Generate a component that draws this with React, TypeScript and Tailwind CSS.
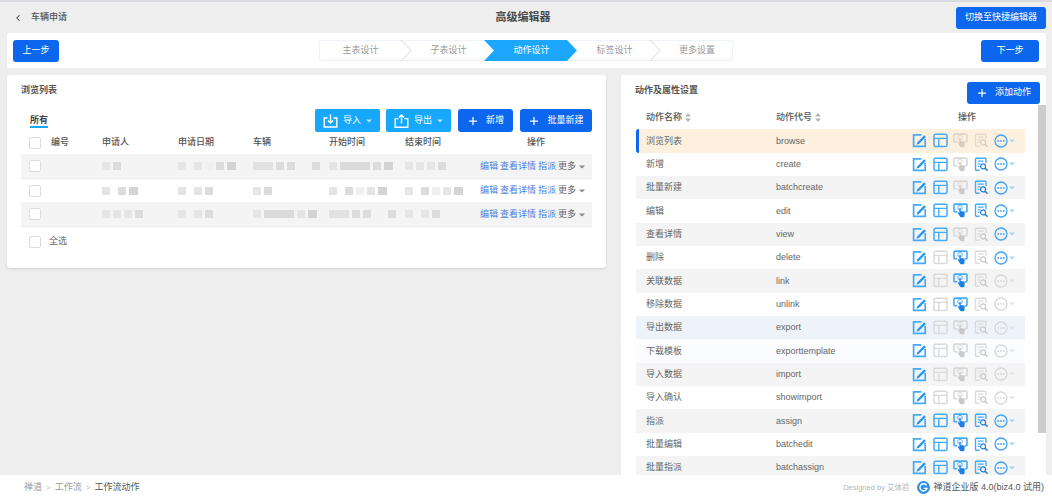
import React from "react";
import { ChevronLeft, Plus } from "lucide-react";

const font = "font-['Liberation_Sans','Noto_Sans_CJK_SC',sans-serif]";

const tokens: Record<string, string> = {
  a: "w-2 bg-[#f0f0f0]",
  b: "w-2 bg-[#e5e5e5]",
  c: "w-2 bg-[#dcdcdc]",
  d: "w-[9px] bg-[#d3d3d3]",
  W: "w-5 bg-[#e2e2e2]",
  X: "w-[30px] bg-[#dadada]",
  ".": "w-[2px]",
  "-": "w-[11px]",
};

const listRows = [
  { a: "bc", d: "b.bacd", car: "Wcc-c", s: "bXcd", e: "bbbc" },
  { a: "b.cd", d: "b.bc", car: "bc", s: "b.cabd", e: "b.cabd" },
  { a: "bbbc", d: "b.bc", car: "bXbd", s: "Wcc-c", e: "b.bc" },
];

const columns = [
  { label: "浏览列表", code: "browse", on: "11001", bg: "bg-[#fdf0de]" },
  { label: "新增", code: "create", on: "11011", bg: "bg-white" },
  { label: "批量新建", code: "batchcreate", on: "11011", bg: "bg-[#f4f4f4]" },
  { label: "编辑", code: "edit", on: "11111", bg: "bg-white" },
  { label: "查看详情", code: "view", on: "11001", bg: "bg-[#f4f4f4]" },
  { label: "删除", code: "delete", on: "10101", bg: "bg-white" },
  { label: "关联数据", code: "link", on: "10100", bg: "bg-[#f4f4f4]" },
  { label: "移除数据", code: "unlink", on: "10100", bg: "bg-white" },
  { label: "导出数据", code: "export", on: "10000", bg: "bg-[#eef3fa]" },
  { label: "下载模板", code: "exporttemplate", on: "10000", bg: "bg-[#fafcff]" },
  { label: "导入数据", code: "import", on: "10000", bg: "bg-[#f4f4f4]" },
  { label: "导入确认", code: "showimport", on: "10000", bg: "bg-white" },
  { label: "指派", code: "assign", on: "11111", bg: "bg-[#f4f4f4]" },
  { label: "批量编辑", code: "batchedit", on: "11111", bg: "bg-white" },
  { label: "批量指派", code: "batchassign", on: "11111", bg: "bg-[#f4f4f4]" },
];

const Blocks = ({ spec }: { spec: string }) => (
  <div className="flex items-center">
    {spec.split("").map((t, i) => (
      <span key={i} className={`h-2 mr-[3px] ${tokens[t]}`} />
    ))}
  </div>
);

const Checkbox = () => (
  <span className="block w-3 h-3 bg-white border-[1.5px] border-[#dcdcdc] rounded-[2px]" />
);

const Caret = ({ className }: { className: string }) => (
  <svg width="6" height="4" viewBox="0 0 6 4" className={className}>
    <path d="M0 .5h6L3 3.5z" fill="currentColor" />
  </svg>
);

const Sort = () => (
  <svg width="6" height="9" viewBox="0 0 6 9" className="text-[#b5b5b5]">
    <path d="M3 0l3 3.6H0zM3 9L0 5.4h6z" fill="currentColor" />
  </svg>
);

const EditIcon = ({ on }: { on: boolean }) => (
  <svg width="15" height="15" viewBox="0 0 15 15" fill="none" className={on ? "text-[#45aafa]" : "text-[#d6d6d6]"}>
    <path d="M9.4 1.9H1.6v11.5h11.6V6" stroke="currentColor" strokeWidth="1.7" />
    <path d="M5.2 9.4l7-7.2 1.7 1.7-7 7.2-2.4.7z" fill="#2a96f3" />
  </svg>
);

const LayoutIcon = ({ on, tint }: { on: boolean; tint: boolean }) => (
  <svg width="15" height="15" viewBox="0 0 15 15" fill="none" className={on ? "text-[#45aafa]" : tint ? "text-[#e2dacd]" : "text-[#dadada]"}>
    <rect x="1" y="1.2" width="13" height="12.4" rx="1.5" stroke="currentColor" strokeWidth="1.5" />
    <path d="M1 5.4h13M5.8 5.4v8" stroke="currentColor" strokeWidth="1.4" />
  </svg>
);

const TouchIcon = ({ on, tint }: { on: boolean; tint: boolean }) => {
  const color = on ? "text-[#45aafa]" : tint ? "text-[#dfd6c9]" : "text-[#d8d8d8]";
  const hand = on ? "#1a80e6" : tint ? "#d5ccbf" : "#c9c9c9";
  return (
    <svg width="15" height="15" viewBox="0 0 15 15" fill="none" className={color}>
      <path d="M4.4 8.8H1.8c-.5 0-.8-.3-.8-.8V1.9c0-.5.3-.8.8-.8h11.4c.5 0 .8.3.8.8V8c0 .5-.3.8-.8.8h-1.4" stroke="currentColor" strokeWidth="1.6" />
      <circle cx="7" cy="4.6" r="2.3" stroke="currentColor" strokeWidth=".9" />
      <path d="M6.4 5c0-.8 1.2-.8 1.2 0v3l3.2.6c.6.1 1 .6.9 1.2l-.3 3.6c0 .5-.4.8-.9.8H8c-.4 0-.7-.2-.9-.5L5 10.2c-.4-.6.3-1.2.8-.8l.6.5z" fill={hand} />
    </svg>
  );
};

const DocIcon = ({ on, tint }: { on: boolean; tint: boolean }) => {
  const color = on ? "text-[#45aafa]" : tint ? "text-[#e2dacd]" : "text-[#dadada]";
  const glass = on ? "#1f7fdc" : tint ? "#d5ccbf" : "#c8c8c8";
  return (
    <svg width="15" height="15" viewBox="0 0 15 15" fill="none" className={color}>
      <path d="M5.6 13.3H2.2c-.4 0-.7-.3-.7-.7V1.9c0-.4.3-.7.7-.7h9.1c.4 0 .7.3.7.7v4" stroke="currentColor" strokeWidth="1.4" />
      <path d="M3.8 4.2h5.8M3.8 6.8h2.6M3.8 9.4h1.8" stroke="currentColor" strokeWidth="1.2" />
      <circle cx="9.1" cy="9.4" r="2.5" stroke={glass} strokeWidth="1.2" />
      <path d="M11 11.3l2.6 2.5" stroke={glass} strokeWidth="1.5" />
    </svg>
  );
};

const MoreIcon = ({ on, tint }: { on: boolean; tint: boolean }) => (
  <span className={`flex items-center gap-[1px] -ml-px ${on ? "text-[#3fa2f6]" : "text-[#d8d8d8]"}`}>
    <svg width="14" height="14" viewBox="0 0 14 14" fill="none">
      <circle cx="7" cy="7" r="6" stroke="currentColor" strokeWidth="1.3" />
      <circle cx="4.2" cy="7" r=".9" fill="currentColor" />
      <circle cx="7" cy="7" r=".9" fill="currentColor" />
      <circle cx="9.8" cy="7" r=".9" fill="currentColor" />
    </svg>
    <Caret className={on || tint ? "text-[#a9d4f7]" : "text-[#e2e2e2]"} />
  </span>
);

const ImportIcon = () => (
  <svg width="15" height="14" viewBox="0 0 15 14" fill="none" stroke="white" strokeWidth="1.4">
    <path d="M4.5 4H1.2v9h12.6V4h-3.3" />
    <path d="M7.5 .5v8.2M5 6.4l2.5 2.6L10 6.4" />
  </svg>
);

const ExportIcon = () => (
  <svg width="15" height="14" viewBox="0 0 15 14" fill="none" stroke="white" strokeWidth="1.4">
    <path d="M4.5 4.6H1.2v8.6h12.6V4.6h-3.3" />
    <path d="M7.5 9.5V1.2M5 3.5l2.5-2.6L10 3.5" />
  </svg>
);

const Chevron = () => (
  <svg width="11" height="21" viewBox="0 0 11 21" fill="none" className="absolute right-[-11px] -top-px text-[#c8ccd2]">
    <path d="M0 0l10 10.5L0 21" stroke="currentColor" strokeWidth=".8" />
  </svg>
);

const Step = ({ label, width, first, chevron, active }: { label: string; width: string; first?: boolean; chevron?: boolean; active?: boolean }) => (
  <div className={`relative h-full flex items-center justify-center ${width} ${first ? "" : "pl-3"} ${active ? "text-white" : "text-[#9a9a9a]"}`}>
    {active && (
      <svg width="93" height="21" viewBox="0 0 93 21" className="absolute left-0 -top-px text-[#1ca7fd]">
        <path d="M0 0h83l10 10.5L83 21H0l10-10.5z" fill="currentColor" />
      </svg>
    )}
    <span className="relative">{label}</span>
    {chevron && <Chevron />}
  </div>
);

const PrimaryButton = ({ children, className }: { children: React.ReactNode; className: string }) => (
  <button className={`h-[22px] flex items-center justify-center rounded-[3px] bg-[#0c67ee] text-white text-[9px] ${className}`}>
    {children}
  </button>
);

export default function App() {
  return (
    <div className={`w-[1052px] h-[500px] flex flex-col overflow-hidden bg-[#eeeeee] border-t-2 border-[#d9d9e0] text-[9px] text-[#666] ${font}`}>
      {/* Header */}
      <div className="h-[31px] shrink-0 flex items-center pl-[13px] pr-[6px]">
        <div className="w-[450px] flex items-center text-[#555] font-medium">
          <ChevronLeft size={10} strokeWidth={2.5} className="text-[#444]" />
          <span className="ml-2">车辆申请</span>
        </div>
        <div className="w-[112px] ml-[4px] text-center text-[11px] font-semibold text-[#4a4a4a]">高级编辑器</div>
        <PrimaryButton className="w-[90px] ml-auto">切换至快捷编辑器</PrimaryButton>
      </div>

      {/* Toolbar */}
      <div className="h-[35px] shrink-0 ml-[7px] mr-[6px] bg-white rounded-[2px] flex items-center pl-[6px] pr-[7px]">
        <PrimaryButton className="w-[46px]">上一步</PrimaryButton>
        <div className="h-[21px] w-[414px] ml-[260px] border border-[#eef3f9] rounded-[2px] flex items-center">
          <Step label="主表设计" width="w-[81px]" first chevron />
          <Step label="子表设计" width="w-[83px]" />
          <Step label="动作设计" width="w-[83px]" active />
          <Step label="标签设计" width="w-[83px]" chevron />
          <Step label="更多设置" width="w-[82px]" />
        </div>
        <PrimaryButton className="w-[58px] ml-auto">下一步</PrimaryButton>
      </div>

      {/* Main */}
      <div className="flex-1 min-h-0 flex items-start gap-[15px] mt-[7px] pl-[7px] pr-[6px]">
        {/* Left panel */}
        <div className="w-[599px] h-[193px] bg-white rounded-[3px] shadow-sm px-[14px]">
          <div className="h-[30px] pt-[2px] flex items-center font-semibold text-[#555]">浏览列表</div>
          <div className="h-[26px] flex items-start pt-[4px]">
            <div className="ml-[9px] mt-[4px] h-[15px] border-b-2 border-[#17a8fb] text-[#444] font-semibold leading-[14px]">所有</div>
            <div className="ml-auto flex items-center">
              <button className="w-[65px] h-[23px] rounded-[2px] bg-[#17a8fb] text-white flex items-center justify-center gap-[5px]">
                <ImportIcon />
                <span>导入</span>
                <Caret className="text-white/70" />
              </button>
              <button className="w-[65px] h-[23px] ml-[6px] rounded-[2px] bg-[#17a8fb] text-white flex items-center justify-center gap-[5px]">
                <ExportIcon />
                <span>导出</span>
                <Caret className="text-white/70" />
              </button>
              <button className="w-[55px] h-[23px] ml-[7px] rounded-[3px] bg-[#0c67ee] text-white flex items-center justify-center gap-[7px]">
                <Plus size={12} strokeWidth={2.5} />
                <span>新增</span>
              </button>
              <button className="w-[72px] h-[23px] ml-[7px] rounded-[3px] bg-[#0c67ee] text-white flex items-center justify-center gap-[7px]">
                <Plus size={12} strokeWidth={2.5} />
                <span>批量新建</span>
              </button>
            </div>
          </div>

          {/* Table */}
          <div className="w-[571px]">
            <div className="h-[23px] grid grid-cols-[22px_51px_76px_75px_76px_76px_1fr] items-center pl-2 text-[#555] font-medium">
              <Checkbox />
              <span>编号</span>
              <span>申请人</span>
              <span>申请日期</span>
              <span>车辆</span>
              <span>开始时间</span>
              <span className="flex justify-between pr-[47px]">
                <span>结束时间</span>
                <span>操作</span>
              </span>
            </div>
            {listRows.map((row, i) => (
              <div
                key={i}
                className={`grid grid-cols-[22px_51px_76px_75px_76px_76px_1fr] items-center pl-2 ${i === 1 ? "h-[23px] bg-white" : "h-[25px] bg-[#f4f4f4] border-b border-[#ebebeb]"}`}
              >
                <Checkbox />
                <span />
                <Blocks spec={row.a} />
                <Blocks spec={row.d} />
                <Blocks spec={row.car} />
                <Blocks spec={row.s} />
                <div className="flex items-center">
                  <div className="w-[75px]">
                    <Blocks spec={row.e} />
                  </div>
                  <div className="flex items-center gap-[2px] pt-px whitespace-nowrap text-[#4b82e2]">
                    <span>编辑</span>
                    <span>查看详情</span>
                    <span>指派</span>
                    <span className="text-[#666]">更多</span>
                    <Caret className="text-[#888] ml-[1px]" />
                  </div>
                </div>
              </div>
            ))}
            <div className="h-[28px] pt-px flex items-center pl-2 gap-[8px]">
              <Checkbox />
              <span>全选</span>
            </div>
          </div>
        </div>

        {/* Right panel */}
        <div className="flex-1 self-stretch min-h-0 overflow-hidden bg-white rounded-t-[3px] pl-[15px]">
          <div className="h-[30px] flex items-center pr-[6px]">
            <span className="-ml-px pt-[2px] font-semibold text-[#555]">动作及属性设置</span>
            <button className="w-[73px] h-[22px] mt-[5px] ml-auto rounded-[3px] bg-[#0c67ee] text-white flex items-center justify-center gap-[7px]">
              <Plus size={12} strokeWidth={2.5} />
              <span>添加动作</span>
            </button>
          </div>
          <div className="flex">
            <div className="w-[389px]">
              <div className="h-[24.3px] pt-px flex items-center pl-[10px] text-[#555] font-medium">
                <span className="w-[130px] flex items-center gap-[3px]">动作名称 <Sort /></span>
                <span className="w-[182px] flex items-center gap-[3px]">动作代号 <Sort /></span>
                <span>操作</span>
              </div>
              {columns.map((row, i) => {
                const tint = i === 0;
                const on = (n: number) => row.on[n] === "1";
                return (
                  <div key={row.code} className={`relative h-[23.33px] flex items-center pl-[10px] ${row.bg}`}>
                    {i === 0 && <span className="absolute left-0 top-0 bottom-0 w-[3px] rounded-l-[3px] bg-[#0c67ee]" />}
                    <span className="w-[130px] pt-px">{row.label}</span>
                    <span className="w-[136px] pt-px">{row.code}</span>
                    <div className="flex items-center gap-[5.7px]">
                      <EditIcon on={on(0)} />
                      <LayoutIcon on={on(1)} tint={tint} />
                      <TouchIcon on={on(2)} tint={tint} />
                      <DocIcon on={on(3)} tint={tint} />
                      <MoreIcon on={on(4)} tint={tint} />
                    </div>
                  </div>
                );
              })}
            </div>
            <div className="ml-[13px] w-[8px] h-[328px] bg-[#cccccc]" />
          </div>
        </div>
      </div>

      {/* Footer */}
      <div className="h-[25px] shrink-0 bg-white flex items-center pl-[24px] pr-[8px]">
        <span className="text-[#999]">禅道</span>
        <span className="mx-[4px] text-[#bbb] text-[8px]">&gt;</span>
        <span className="text-[#999]">工作流</span>
        <span className="mx-[4px] text-[#bbb] text-[8px]">&gt;</span>
        <span className="text-[#555]">工作流动作</span>
        <span className="ml-auto text-[7.5px] text-[#b5b5b5]">Designed by 艾体验</span>
        <svg width="13" height="13" viewBox="0 0 13 13" fill="none" className="ml-[8px]">
          <circle cx="6.5" cy="6.5" r="6.5" fill="#2f8fe8" />
          <path d="M9.6 4.4A3.6 3.6 0 1 0 10 7.4H6.8" stroke="white" strokeWidth="1.4" />
        </svg>
        <span className="ml-[3px] text-[#555]">禅道企业版 4.0(biz4.0 试用)</span>
      </div>
    </div>
  );
}
